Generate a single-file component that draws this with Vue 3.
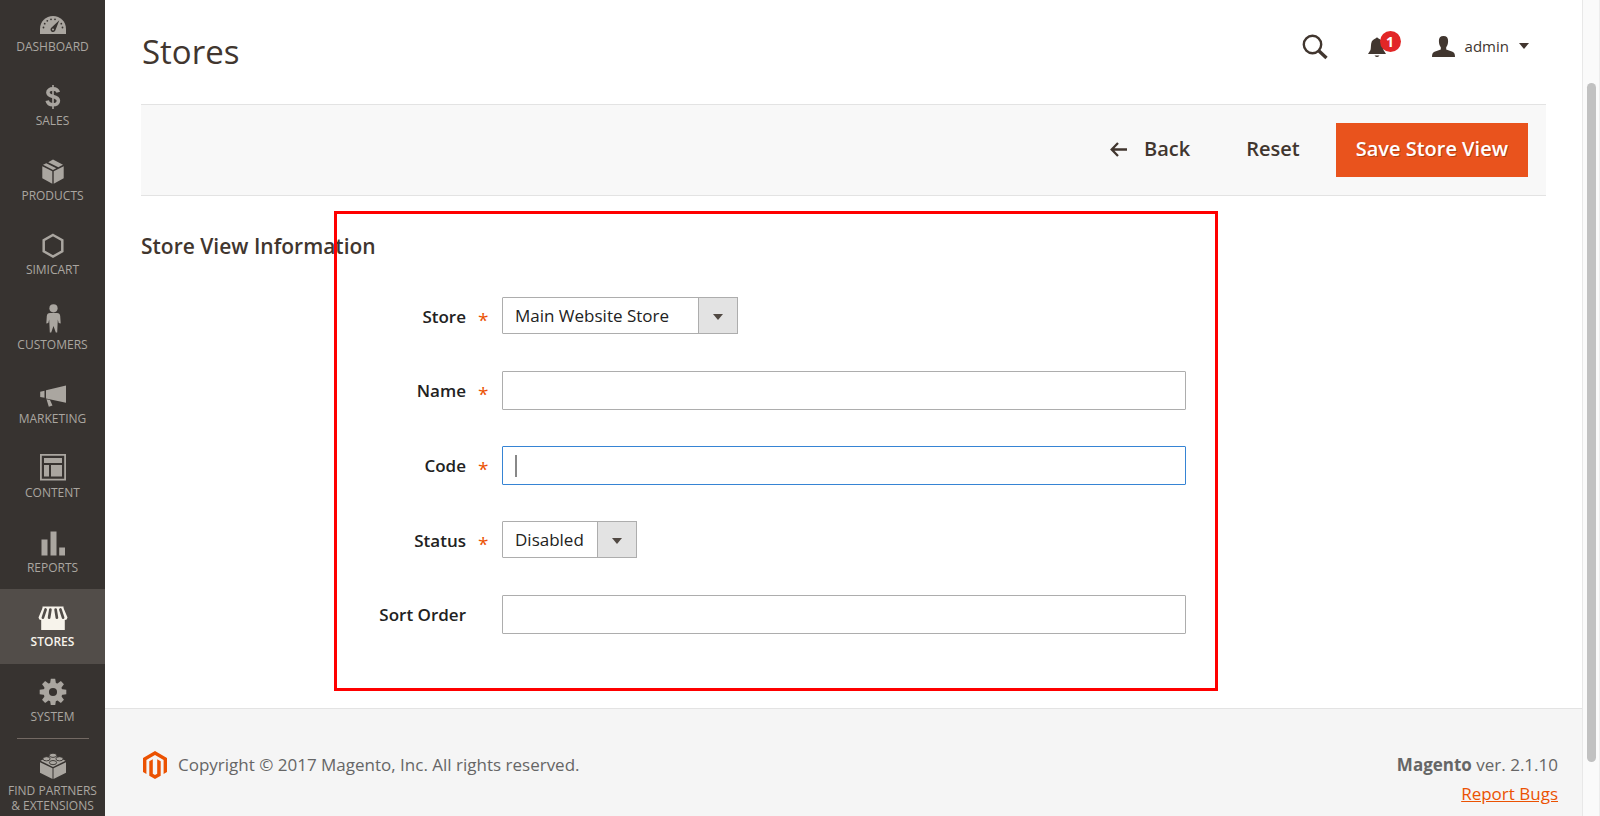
<script setup>
import { ref } from 'vue'

const menu = [
  { id: 'dashboard', label: 'Dashboard' },
  { id: 'sales', label: 'Sales' },
  { id: 'products', label: 'Products' },
  { id: 'simicart', label: 'Simicart' },
  { id: 'customers', label: 'Customers' },
  { id: 'marketing', label: 'Marketing' },
  { id: 'content', label: 'Content' },
  { id: 'reports', label: 'Reports' },
  { id: 'stores', label: 'Stores', active: true },
  { id: 'system', label: 'System' },
]

const form = ref({ store: 'Main Website Store', name: '', code: '', status: 'Disabled', sort: '' })

const teeth = [0, 45, 90, 135, 180, 225, 270, 315]
</script>

<template>
  <div class="page">
    <aside class="sidebar">
      <nav class="nav">
        <ul class="menu">
          <li v-for="item in menu" :key="item.id" class="menu-item" :class="{ active: item.active }">
            <a href="#" class="menu-link">
              <svg class="menu-icon" viewBox="0 0 30 30" fill="currentColor" aria-hidden="true">
                <g v-if="item.id === 'dashboard'">
                  <path d="M2 29V24C2 16.500 7.800 11 15 11S28 16.500 28 24V29Z" />
                  <g class="cut">
                    <circle cx="5.500" cy="22.500" r="0.900" /><circle cx="6.700" cy="18.700" r="0.900" />
                    <circle cx="9.300" cy="15.800" r="0.900" /><circle cx="13" cy="14.300" r="0.900" />
                    <circle cx="17" cy="14.300" r="0.900" /><circle cx="23.300" cy="18.700" r="0.900" />
                    <circle cx="24.500" cy="22.500" r="0.900" />
                    <path d="M21.300 15.300L17.400 25.200A2.500 2.500 0 1 1 13.300 22.700Z" />
                  </g>
                  <circle cx="15" cy="24.500" r="1" />
                </g>
                <g v-else-if="item.id === 'sales'" fill="none" stroke="currentColor">
                  <path stroke-width="3.600" d="M20.300 13.300C19.600 11 17.600 9.900 15 9.900C11.900 9.900 9.900 11.400 9.900 13.600C9.900 18.800 20.400 16.200 20.400 21.700C20.400 24.200 18.200 25.800 15 25.800C11.900 25.800 9.800 24.500 9.200 21.700" />
                  <path stroke-width="1.600" d="M15 6V30" />
                </g>
                <g v-else-if="item.id === 'products'">
                  <path d="M4.300 12.300L14.300 17.300V29.700L4.300 24.300ZM25.700 12.300L15.700 17.300V29.700L25.700 24.300Z" />
                  <path d="M5 10.800L8.300 9.200L18.300 14.200L15 15.900ZM10.200 8.200L15 5.500L25 10.800L20.300 13.200Z" />
                </g>
                <path v-else-if="item.id === 'simicart'" fill="none" stroke="currentColor" stroke-width="2.500" d="M15 7L24.300 12.200V23.300L15 28.500L5.700 23.300V12.200Z" />
                <g v-else-if="item.id === 'customers'">
                  <circle cx="15.500" cy="5.300" r="4.100" />
                  <path d="M12 10H19C21 10 22 11 22.200 13L22.700 20.500L20.700 20L19.800 16.500L19.200 29.500H17.800L15.500 23L13.200 29.500H11.800L11.200 16.500L10.300 20L8.300 20.500L8.800 13C9 11 10 10 12 10Z" />
                </g>
                <g v-else-if="item.id === 'marketing'">
                  <path d="M28 8.500V25.700L8 21.500V13.300ZM2.200 14.700L6.500 13.700V20.700L2.200 20ZM8.500 22.300L12 23L14.500 28.500L10.800 29.700Z" />
                </g>
                <g v-else-if="item.id === 'content'">
                  <path fill-rule="evenodd" d="M2 3H28V29.500H2ZM3.800 4.800V27.700H26.200V4.800Z" />
                  <path d="M6 7H24V12H6ZM6 14H11V25.500H6ZM13 14H24V25.500H13Z" />
                </g>
                <path v-else-if="item.id === 'reports'" d="M3.500 13.500H9.500V29.500H3.500ZM12.500 5.500H18.500V29.500H12.500ZM21.200 21.500H27V29.500H21.200Z" />
                <g v-else-if="item.id === 'stores'">
                  <path d="M4.500 6.500H25.500V8.500H4.500ZM3.200 18H26.800V30H3.200Z" />
                  <path d="M4.500 8H25.500L29.500 17.500Q29 20 27 20T24 18.500H6Q5 20 3 20T0.500 17.500Z" />
                  <path class="stripes" d="M7.600 9.500L4.900 17.700M12.400 9.500L11.100 17.700M17.600 9.500L18.900 17.700M22.400 9.500L25.100 17.700" />
                </g>
                <g v-else>
                  <circle cx="15" cy="17" r="6.800" fill="none" stroke="currentColor" stroke-width="5.500" />
                  <path v-for="a in teeth" :key="a" :transform="`rotate(${a} 15 17)`" d="M12 9L12.800 3.700H17.200L18 9Z" />
                </g>
              </svg>
              <span>{{ item.label }}</span>
            </a>
          </li>
        </ul>
        <a href="#" class="menu-link partners">
          <svg class="menu-icon" viewBox="0 0 30 30" fill="currentColor" aria-hidden="true">
            <path d="M2 13.200L14.500 19.300V30L2 23.700ZM28 13.200L15.500 19.300V30L28 23.700Z" />
            <path d="M2.500 11.700L15 5.800L27.500 11.700L15 18Z" />
            <g class="studs">
              <ellipse cx="15" cy="6.300" rx="3.600" ry="2.100" /><ellipse cx="8.500" cy="9.800" rx="3.600" ry="2.100" />
              <ellipse cx="21.500" cy="9.800" rx="3.600" ry="2.100" /><ellipse cx="15" cy="13.600" rx="3.600" ry="2.100" />
            </g>
          </svg>
          <span>Find Partners<br />&amp; Extensions</span>
        </a>
      </nav>
    </aside>

    <div class="main">
      <header class="header">
        <h1>Stores</h1>
        <div class="tools">
          <button type="button" class="icon-button" aria-label="Search">
            <svg width="26" height="26" viewBox="0 0 26 26" fill="none" stroke="currentColor">
              <circle cx="10.500" cy="10.500" r="8.700" stroke-width="2.400" />
              <path stroke-width="3.400" d="M17 17L24.500 24" />
            </svg>
          </button>
          <button type="button" class="icon-button bell" aria-label="Notifications">
            <svg width="18" height="22" viewBox="0 0 18 22" fill="currentColor">
              <path d="M0 18L2.500 14C3 12 2.800 10 3.200 7.500C3.700 4.500 5.500 3 7.500 2.400Q9 .6 10.500 2.400C12.500 3 14.300 4.500 14.800 7.500C15.200 10 15 12 15.500 14L18 18ZM6.500 19.500H11.500Q9 22.500 6.500 19.500Z" />
            </svg>
            <span class="badge">1</span>
          </button>
          <button type="button" class="account">
            <svg width="23" height="21" viewBox="0 0 23 21" fill="currentColor" aria-hidden="true">
              <path d="M11.500 0C14.700 0 16.200 1.900 16.100 5C16.100 8.500 15 10 14.200 11.200V13.500L20.500 15.700C22.300 16.400 23 18 23 21H0C0 18 .7 16.400 2.500 15.700L8.800 13.500V11.200C8 10 6.900 8.500 6.900 5C6.800 1.900 8.300 0 11.500 0Z" />
            </svg>
            <span>admin</span>
            <i class="caret"></i>
          </button>
        </div>
      </header>

      <div class="toolbar">
        <button type="button" class="action back">
          <svg width="17" height="15" viewBox="0 0 17 15" fill="none" stroke="currentColor" stroke-width="2.300" aria-hidden="true">
            <path d="M17 7.500H2M8 1L1.700 7.500L8 14" />
          </svg>
          Back
        </button>
        <button type="button" class="action">Reset</button>
        <button type="button" class="action primary">Save Store View</button>
      </div>

      <section class="section">
        <h2>Store View Information</h2>
        <form class="form" @submit.prevent>
          <label class="required" for="store">Store</label>
          <div class="select wide">
            <select id="store" v-model="form.store"><option>Main Website Store</option></select>
            <span class="select-arrow"><i class="caret"></i></span>
          </div>
          <label class="required" for="name">Name</label>
          <div class="field"><input id="name" v-model="form.name" type="text" /></div>
          <label class="required" for="code">Code</label>
          <div class="field current"><input id="code" v-model="form.code" type="text" /><i class="cursor"></i></div>
          <label class="required" for="status">Status</label>
          <div class="select narrow">
            <select id="status" v-model="form.status"><option>Disabled</option><option>Enabled</option></select>
            <span class="select-arrow"><i class="caret"></i></span>
          </div>
          <label for="sort">Sort Order</label>
          <div class="field"><input id="sort" v-model="form.sort" type="text" /></div>
        </form>
        <div class="highlight"></div>
      </section>

      <footer class="footer">
        <div class="copyright">
          <svg width="24" height="28" viewBox="0 0 24 28" fill="#eb5202" aria-hidden="true">
            <path d="M12 0L24 7V21L20.600 23V9L12 4L3.400 9V23L0 21V7Z" />
            <path d="M6.300 10.300L9.800 8.300V22.800L12 24.100L14.200 22.800V8.300L17.700 10.300V24.700L12 28L6.300 24.700Z" />
          </svg>
          <span>Copyright © 2017 Magento, Inc. All rights reserved.</span>
        </div>
        <div class="version">
          <p><strong>Magento</strong> ver. 2.1.10</p>
          <a href="#">Report Bugs</a>
        </div>
      </footer>
    </div>

    <div class="scrollbar"><div class="thumb"></div></div>
  </div>
</template>

<style>
body {
  margin: 0;
}
</style>

<style scoped>
.page {
  display: grid;
  grid-template-columns: 105px minmax(0, 1fr) 18px;
  height: 100vh;
  overflow: hidden;
  background: #fff;
  color: #41362f;
  font: 17px/24px "Open Sans", "Noto Sans", sans-serif;
}
.page * {
  box-sizing: border-box;
}
h1, h2, p, ul {
  margin: 0;
  padding: 0;
}
button {
  font: inherit;
  color: inherit;
  background: none;
  border: 0;
  padding: 0;
}
.sidebar {
  display: flex;
  flex-direction: column;
  background: #373330;
}
.nav {
  display: flex;
  flex: 1;
  flex-direction: column;
  margin-top: -6px;
}
.menu {
  display: flex;
  flex: 1;
  flex-direction: column;
  list-style: none;
}
.menu-item {
  flex: 1;
}
.menu-item.active {
  background: #524d49;
}
.menu-link {
  display: flex;
  flex-direction: column;
  align-items: center;
  gap: 4px;
  padding-top: 11px;
  color: #aaa6a0;
  font-size: 12px;
  line-height: 15px;
  text-align: center;
  text-decoration: none;
  text-transform: uppercase;
}
.active .menu-link {
  color: #f7f3eb;
  font-weight: 600;
}
.menu-icon {
  width: 30px;
  height: 30px;
}
.cut {
  fill: #373330;
}
.stripes {
  fill: none;
  stroke: #524d49;
  stroke-width: 2.7;
  stroke-linecap: round;
}
.studs {
  stroke: #373330;
  stroke-width: 0.9;
}
.partners {
  position: relative;
  height: 78px;
}
.partners::before {
  content: "";
  position: absolute;
  top: 0;
  left: 17px;
  right: 16px;
  height: 1px;
  background: #736963;
}
.main {
  display: flex;
  flex-direction: column;
}
.header {
  display: flex;
  justify-content: space-between;
  height: 104px;
  padding: 0 53px 0 37px;
}
h1 {
  padding-top: 30px;
  font-size: 33px;
  line-height: 44px;
  font-weight: 400;
}
.tools {
  display: flex;
  align-items: center;
  height: 92px;
}
.icon-button {
  display: flex;
  margin-right: 40px;
  padding-top: 2px;
}
.bell {
  position: relative;
  margin-right: 46px;
}
.badge {
  position: absolute;
  top: -3px;
  left: 12px;
  width: 21px;
  height: 21px;
  border-radius: 11px;
  background: #e22626;
  color: #fff;
  font-size: 14px;
  font-weight: 700;
  line-height: 21px;
  text-align: center;
}
.account {
  display: flex;
  align-items: center;
  gap: 10px;
  font-size: 15px;
}
.caret {
  border: 5px solid transparent;
  border-top: 6px solid currentColor;
  border-bottom: 0;
}
.toolbar {
  display: flex;
  align-items: center;
  justify-content: flex-end;
  gap: 36px;
  height: 92px;
  margin: 0 36px;
  padding-right: 18px;
  background: #f8f8f8;
  border-top: 1px solid #e3e3e3;
  border-bottom: 1px solid #e3e3e3;
}
.action {
  display: flex;
  align-items: center;
  gap: 17px;
  height: 54px;
  padding-bottom: 2px;
  font-size: 20px;
  font-weight: 600;
}
.back {
  margin-right: 20px;
  font-size: 20px;
}
.primary {
  padding: 0 20px 2px;
  background: #e9531d;
  color: #fff;
  text-shadow: 1px 1px 0 rgba(0, 0, 0, 0.25);
}
.section {
  position: relative;
  margin: 0 36px;
  padding: 35px 0 74px;
}
h2 {
  font-size: 21px;
  font-weight: 600;
  line-height: 30px;
}
.form {
  display: grid;
  grid-template-columns: 325px minmax(0, 684px);
  gap: 36px;
  align-items: center;
  margin-top: 36px;
}
label {
  position: relative;
  padding-top: 1px;
  color: #222;
  font-weight: 600;
  text-align: right;
}
.required::after {
  content: "*";
  position: absolute;
  top: 4px;
  left: calc(100% + 12px);
  color: #eb5202;
  font-size: 19px;
  font-weight: 400;
}
.field,
.select {
  position: relative;
  display: flex;
}
.select {
  height: 38px;
}
.wide {
  width: 236px;
}
.narrow {
  width: 135px;
}
input,
select {
  width: 100%;
  margin: 0;
  padding: 0 12px;
  border: 1px solid #adadad;
  border-radius: 1px;
  background: #fff;
  color: #222;
  font: inherit;
  outline: none;
}
input {
  height: 39px;
}
select {
  height: 37px;
  appearance: none;
}
.current input {
  border-color: #3684d4;
}
.cursor {
  position: absolute;
  top: 9px;
  left: 13px;
  width: 2px;
  height: 22px;
  background: #888;
}
.select-arrow {
  position: absolute;
  top: 0;
  right: 0;
  display: flex;
  align-items: center;
  justify-content: center;
  width: 40px;
  height: 37px;
  padding-top: 3px;
  border: 1px solid #adadad;
  background: #e3e3e3;
  color: #514943;
  pointer-events: none;
}
.highlight {
  position: absolute;
  inset: 15px 328px 17px 193px;
  border: 3px solid #f00;
  pointer-events: none;
}
.footer {
  display: flex;
  flex: 1;
  justify-content: space-between;
  padding: 41px 24px 0 38px;
  background: #f5f5f5;
  border-top: 1px solid #e3e3e3;
  color: #666;
  line-height: 29px;
}
.copyright {
  display: flex;
  align-items: center;
  gap: 11px;
  height: 29px;
}
.version {
  text-align: right;
}
.version a {
  color: #eb5202;
}
.scrollbar {
  padding: 83px 3px 0 4px;
  background: #fafafa;
  border-left: 1px solid #e8e8e8;
  border-right: 1px solid #ededed;
}
.thumb {
  height: calc(100vh - 137px);
  border-radius: 5px;
  background: #c1c1c1;
}
</style>
